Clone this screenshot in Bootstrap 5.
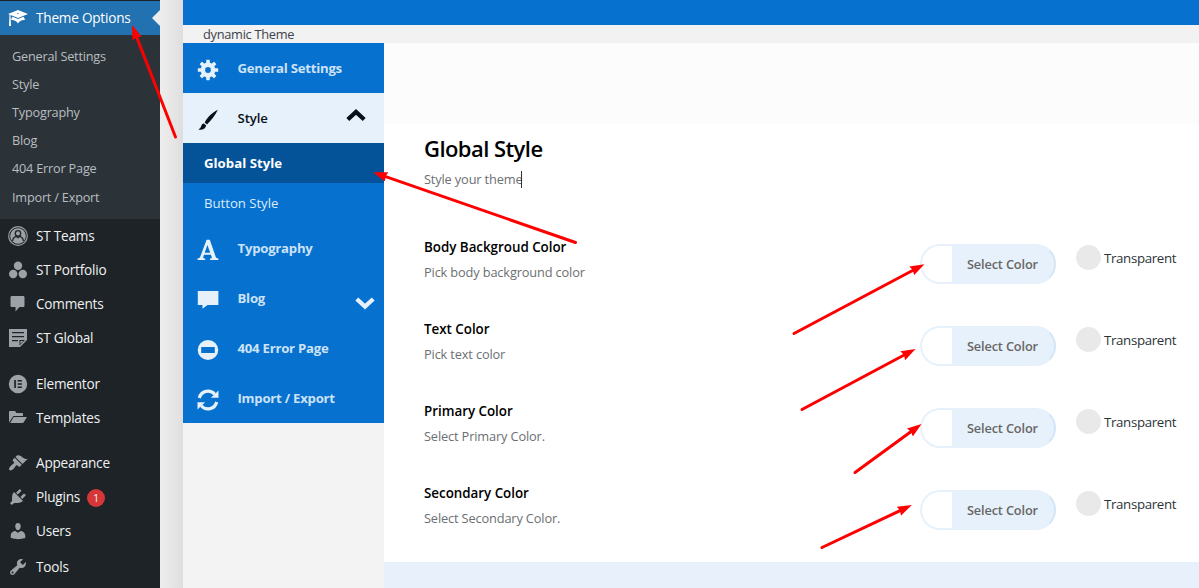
<!DOCTYPE html>
<html lang="en">
<head>
<meta charset="utf-8">
<title>Theme Options</title>
<link href="https://cdn.jsdelivr.net/npm/bootstrap@5.3.0/dist/css/bootstrap.min.css" rel="stylesheet">
<style>
body{font-family:"Open Sans","Noto Sans",sans-serif;font-size:13px;line-height:20px;height:588px;overflow:hidden;background:#f3f3f3;color:#000}
svg{display:block;flex:none}
.adminmenu{width:160px;background:#1d2327;padding-top:1px}
.adminmenu a{height:34.06px;padding-left:8px;gap:8px;font-size:13.6px;letter-spacing:-.22px;color:#f0f0f1;text-decoration:none;white-space:nowrap}
.adminmenu a svg{fill:#9ca2a7;width:20px;height:20px}
.adminmenu a.current{background:#2271b1;color:#fff;position:relative}
.adminmenu a.current svg{fill:#fff}
.adminmenu a.current::after{content:"";position:absolute;right:0;top:9px;border:8px solid transparent;border-right-color:#ececec;border-left:0}
.adminmenu .flyout{background:#2c3338;height:184px;padding:7px 0 0 12px;color:#b8bdc1;font-size:12.7px;letter-spacing:-.2px}
.flyout div{height:28.1px;line-height:28px}
.gap-sep{height:12px}
.count{width:18px;height:18px;background:#d63638;font-size:11px;line-height:18px;letter-spacing:0;margin:2px 0 0 -1px}
.gutter{width:23px;background:linear-gradient(90deg,#ededed,#e7e7e7 50%,#dedede)}
.topband{height:25px;background:#0671cf}
.crumb{height:18px;line-height:18px;padding-left:20px;background:#f2f2f2;color:#3c434a;font-size:12.8px;letter-spacing:-.28px}
.optmenu{width:201px}
.opt{height:50px;padding:0 17px 0 14px;background:#0671cf;color:#cce2f7;font-size:13.2px;font-weight:700;letter-spacing:-.25px}
.opt>svg:first-child{width:22px;height:22px;margin-top:3px;fill:#e6f1fb}
.opt span{margin-left:18.5px;flex:1}
.opt.open{background:#e7f1fb;color:#0a1219;font-weight:600;letter-spacing:-.1px}
.opt.open>svg:first-child{fill:#05101a}
.sub{height:40px;line-height:40px;padding-left:21px;background:#0671cf;color:#dcebf9;font-size:13.2px;letter-spacing:-.03px}
.sub.active{background:#045398;color:#fff;font-weight:700;letter-spacing:.02px}
.subhead{height:81px;background:#fcfcfc}
.panel{height:438px;background:#fff;padding:10px 23px 0 40px}
.panel h1{font-size:22px;line-height:28px;font-weight:600;letter-spacing:-.56px;margin:0}
.hint{font-size:12.8px;letter-spacing:-.15px;color:#6c6f72}
.caret{display:inline-block;width:1px;height:17px;background:#333;vertical-align:-4px;margin-left:-1px}
.field{height:82px}
.field b{font-weight:600;font-size:13.4px;letter-spacing:-.03px;display:block;margin-bottom:5px}
.rows{margin-top:48px}
.picker{width:136px;height:40px;border:2px solid #e7f1fb;border-right-color:#d3e6f8;border-radius:20px;background:#e7f1fb;overflow:hidden;margin-top:7px;color:#676767;font-size:12.8px;font-weight:600;letter-spacing:-.17px}
.swatch{width:30px;background:#fff;margin-right:15px}
.dot{width:25px;height:25px;background:#e9e9e9;margin-right:3px;flex:none}
.trans{margin:8px 0 0 20px;height:25px;width:100px;font-size:13.3px;letter-spacing:-.35px;color:#2c3338}
.foot{height:26px;background:#e8f0fb}
.pointers{left:0;top:0;pointer-events:none}
</style>
<script src="https://cdn.jsdelivr.net/npm/bootstrap@5.3.0/dist/js/bootstrap.bundle.min.js"></script>
</head>
<body class="position-relative">
<div class="d-flex h-100">
<nav class="adminmenu flex-shrink-0">
  <a class="d-flex align-items-center current"><svg viewBox="0 0 20 20"><path d="M10 10L2.54 7.02 3 18H1l.48-11.41L0 6l10-4 10 4zm0-5c-.55 0-1 .22-1 .5s.45.5 1 .5 1-.22 1-.5-.45-.5-1-.5zm0 6l5.57-2.23c.71.94 1.2 2.07 1.36 3.3-.3-.04-.61-.07-.93-.07-2.55 0-4.78 1.37-6 3.41C8.78 13.37 6.55 12 4 12c-.32 0-.63.03-.93.07.16-1.23.65-2.36 1.36-3.3z"/></svg><span>Theme Options</span></a>
  <div class="flyout"><div>General Settings</div><div>Style</div><div>Typography</div><div>Blog</div><div>404 Error Page</div><div>Import / Export</div></div>
  <a class="d-flex align-items-center"><svg viewBox="0 0 20 20"><circle cx="10" cy="10" r="9.3" style="fill:none;stroke:#9ca2a7;stroke-width:1.2"/><circle cx="10" cy="10" r="7.8"/><circle cx="10" cy="7.4" r="2.7" style="fill:#9ca2a7;stroke:#1d2327;stroke-width:1.3"/><path d="M4.6 15c.3-3 2.2-4.3 3.7-4.7l1.7 1.4 1.7-1.4c1.5.4 3.4 1.7 3.7 4.7" style="fill:none;stroke:#1d2327;stroke-width:1.3"/></svg><span>ST Teams</span></a>
  <a class="d-flex align-items-center"><svg viewBox="0 0 20 20"><circle cx="10" cy="5.7" r="4.2"/><circle cx="5.2" cy="14" r="4.2"/><circle cx="14.8" cy="14" r="4.2"/></svg><span>ST Portfolio</span></a>
  <a class="d-flex align-items-center"><svg viewBox="0 0 20 20"><path d="M4 2h11c1 0 1.5.5 1.5 1.5v8c0 1-.5 1.500-1.500 1.500h-3.500L7.500 17.500V13H4c-1 0-1.500-.5-1.500-1.500v-8C2.500 2.500 3 2 4 2z"/></svg><span>Comments</span></a>
  <a class="d-flex align-items-center"><svg viewBox="0 0 20 20"><path fill-rule="evenodd" d="M1 1h18v11l-7 7H1zM4 4v1.300h12V4zm0 4v1.300h12V8zm0 4v1.300h6V12zm7.500 0v5.500l5.500-5.500z"/><path d="M12.500 13h3L12.500 16z"/></svg><span>ST Global</span></a>
  <div class="gap-sep"></div>
  <a class="d-flex align-items-center"><svg viewBox="0 0 20 20"><path fill-rule="evenodd" d="M10 .8a9.200 9.200 0 100 18.400A9.200 9.200 0 0010 .8zM6.200 6h1.700v8H6.200zm3.400 0h4.300v1.500H9.600zm0 3.300h4.300v1.500H9.600zm0 3.200h4.300V14H9.600z"/></svg><span>Elementor</span></a>
  <a class="d-flex align-items-center"><svg viewBox="0 0 20 20"><path d="M1 14.500V4c0-.7.4-1 1-1h5l1.500 2H14c.7 0 1 .4 1 1v2H6.500C5.500 8 5 8.400 4.500 9.200z"/><path d="M6.300 9H19l-3.300 5.300c-.3.500-.7.700-1.200.7H2.200l3-5.300c.3-.5.600-.7 1.100-.7z"/></svg><span>Templates</span></a>
  <div class="gap-sep" style="height:11px"></div>
  <a class="d-flex align-items-center"><svg viewBox="0 0 20 20"><path d="M14.480 11.060L7.410 3.990l1.500-1.500c.5-.56 2.300-.47 3.510.32 1.210.8 1.430 1.280 2.910 2.100 1.180.64 2.450 1.260 4.450.85zm-.71.71L6.700 4.700 4.930 6.470c-.39.39-.39 1.020 0 1.410l1.060 1.060c.39.39.39 1.030 0 1.420-.6.6-1.430 1.110-2.210 1.690-.35.26-.7.53-1.010.84C1.430 14.230.4 16.080 1.400 17.070c.99 1 2.840-.03 4.180-1.360.31-.31.58-.66.85-1.020.57-.78 1.080-1.610 1.690-2.210.39-.39 1.020-.39 1.410 0l1.060 1.060c.39.39 1.020.39 1.410 0z"/></svg><span>Appearance</span></a>
  <a class="d-flex align-items-center"><svg viewBox="0 0 20 20"><path d="M13.110 4.360L9.870 7.600 8 5.730l3.240-3.240c.35-.34 1.050-.2 1.560.32.52.51.66 1.210.31 1.550zm-8 1.770l.91-1.120 9.010 9.010-1.190.84c-.71.71-2.630 1.160-3.820 1.160H6.140L4.900 17.260c-.59.59-1.540.59-2.120 0-.59-.58-.59-1.530 0-2.120l1.240-1.240v-3.880c0-1.130.4-3.190 1.090-3.890zm7.260 3.970l3.240-3.240c.34-.35 1.040-.21 1.550.31.52.51.66 1.210.31 1.550l-3.240 3.250z"/></svg><span>Plugins</span><span class="count rounded-circle text-center">1</span></a>
  <a class="d-flex align-items-center"><svg viewBox="0 0 20 20"><path d="M10 9.250c-2.270 0-2.730-3.440-2.730-3.440C7 4.020 7.820 2 9.970 2c2.160 0 2.980 2.020 2.710 3.810 0 0-.41 3.440-2.680 3.440zm0 2.570L12.720 10c2.390 0 4.520 2.330 4.520 4.530v2.490s-3.650 1.130-7.240 1.130c-3.650 0-7.240-1.130-7.240-1.130v-2.490c0-2.250 1.940-4.480 4.470-4.480z"/></svg><span>Users</span></a>
  <a class="d-flex align-items-center pt-1"><svg viewBox="0 0 20 20"><path d="M16.680 9.770c-1.340 1.340-3.300 1.670-4.950.99l-5.410 6.520c-.99.99-2.590.99-3.580 0s-.99-2.590 0-3.570l6.520-5.420c-.68-1.650-.35-3.610.99-4.950 1.280-1.280 3.120-1.620 4.720-1.060l-2.890 2.890 2.820 2.820 2.860-2.870c.53 1.580.18 3.390-1.080 4.650zM3.810 16.210c.4.390 1.040.39 1.430 0 .4-.4.4-1.040 0-1.430-.39-.4-1.030-.4-1.430 0-.39.39-.39 1.030 0 1.430z"/></svg><span>Tools</span></a>
</nav>
<div class="gutter flex-shrink-0"></div>
<main class="flex-grow-1">
  <div class="topband"></div>
  <div class="crumb">dynamic Theme</div>
  <div class="d-flex">
    <aside class="optmenu flex-shrink-0">
      <div class="opt d-flex align-items-center"><svg viewBox="0 0 22 22"><rect x="9.200" y=".8" width="3.600" height="20.400" rx=".6"/><rect x="9.200" y=".8" width="3.600" height="20.400" rx=".6" transform="rotate(45 11 11)"/><rect x="9.200" y=".8" width="3.600" height="20.400" rx=".6" transform="rotate(90 11 11)"/><rect x="9.200" y=".8" width="3.600" height="20.400" rx=".6" transform="rotate(135 11 11)"/><circle cx="11" cy="11" r="7.400"/><circle cx="11" cy="11" r="2.900" fill="#0671cf"/></svg><span>General Settings</span></div>
      <div class="opt open d-flex align-items-center"><svg viewBox="0 0 22 22"><path d="M20.800.8C14.500 4 10 9 7.700 13.500l2.300 2C14.500 11.200 18.300 6 20.800.8zM6.900 14.500c-1.600.2-2.300 1.200-2.700 2.600-.3 1.300-1.300 2.800-2.800 3.400 3.300 1 7.200-.6 7.800-4z"/></svg><span>Style</span><svg width="22" height="20" viewBox="0 0 22 20" style="margin-top:-4px"><path d="M2.800 13.500L11 6 19.200 13.500" fill="none" stroke="#05101a" stroke-width="4.300"/></svg></div>
      <div class="sub active">Global Style</div>
      <div class="sub">Button Style</div>
      <div class="opt d-flex align-items-center"><svg viewBox="0 0 22 22"><path fill-rule="evenodd" d="M9.600.8h3.200l6 17.200c.3.900 1 1.400 2.600 1.500V21H13v-1.500c1.700-.1 2.100-.4 1.700-1.400l-.8-2.400H7l-.7 2.200c-.3 1 .2 1.500 1.900 1.600V21H.5v-1.500c1.600-.1 2.300-.6 2.700-1.700zM10.400 6L7.700 13.800h5.500z"/></svg><span>Typography</span></div>
      <div class="opt d-flex align-items-center"><svg viewBox="0 0 22 22"><path d="M.8 2h20.600v14H10.500L5.500 19.800V16H.8z"/></svg><span>Blog</span><svg width="22" height="20" viewBox="0 0 22 20" style="margin:9px -9px 0 0"><path d="M2.800 6L11 13.500 19.200 6" fill="none" stroke="#e6f1fb" stroke-width="4.300"/></svg></div>
      <div class="opt d-flex align-items-center"><svg viewBox="0 0 22 22"><path fill-rule="evenodd" d="M11 1a10.300 10 0 100 20A10.300 10 0 0011 1zM4.200 8h13.600v6H4.200z"/></svg><span>404 Error Page</span></div>
      <div class="opt d-flex align-items-center"><svg viewBox="0 0 22 22"><path d="M2.300 9A9 9 0 0117.800 5.200M19.700 13A9 9 0 014.200 16.800" fill="none" stroke="#e6f1fb" stroke-width="3.200"/><path d="M21.500 1.500V8.800H13.800zM.5 20.500V13.200H8.200z"/></svg><span>Import / Export</span></div>
    </aside>
    <section class="flex-grow-1">
      <div class="subhead"></div>
      <div class="panel">
        <h1>Global Style</h1>
        <div class="hint" style="margin-top:7px">Style your theme<i class="caret"></i></div>
        <div class="rows">
          <div class="field d-flex"><div class="flex-grow-1"><b>Body Backgroud Color</b><div class="hint">Pick body background color</div></div><div class="picker d-flex"><i class="swatch"></i><span class="align-self-center">Select Color</span></div><div class="trans d-flex align-items-center"><i class="dot rounded-circle"></i>Transparent</div></div>
          <div class="field d-flex"><div class="flex-grow-1"><b>Text Color</b><div class="hint">Pick text color</div></div><div class="picker d-flex"><i class="swatch"></i><span class="align-self-center">Select Color</span></div><div class="trans d-flex align-items-center"><i class="dot rounded-circle"></i>Transparent</div></div>
          <div class="field d-flex"><div class="flex-grow-1"><b>Primary Color</b><div class="hint">Select Primary Color.</div></div><div class="picker d-flex"><i class="swatch"></i><span class="align-self-center">Select Color</span></div><div class="trans d-flex align-items-center"><i class="dot rounded-circle"></i>Transparent</div></div>
          <div class="field d-flex"><div class="flex-grow-1"><b>Secondary Color</b><div class="hint">Select Secondary Color.</div></div><div class="picker d-flex"><i class="swatch"></i><span class="align-self-center">Select Color</span></div><div class="trans d-flex align-items-center"><i class="dot rounded-circle"></i>Transparent</div></div>
        </div>
      </div>
      <div class="foot"></div>
    </section>
  </div>
</main>
</div>
<!-- red pointers laid over the whole page -->
<svg class="pointers position-absolute" width="1199" height="588" viewBox="0 0 1199 588">
<defs><marker id="head" markerUnits="userSpaceOnUse" markerWidth="20" markerHeight="12" refX="8" refY="5" orient="auto"><path d="M14.500 5L0 0 1.500 5 0 10z" fill="#f00"/></marker></defs>
<g fill="none" stroke="#f00" stroke-width="3" stroke-linecap="round" marker-end="url(#head)">
<path d="M175.500 137L134.300 31"/>
<path d="M575.500 242.500L379.200 174.300"/>
<path d="M794 333.500L918.700 267.200"/>
<path d="M802 409.500L909.800 352"/>
<path d="M855 472.500L916.300 427.800"/>
<path d="M822 547.500L906 507.800"/>
</g></svg>
</body>
</html>
